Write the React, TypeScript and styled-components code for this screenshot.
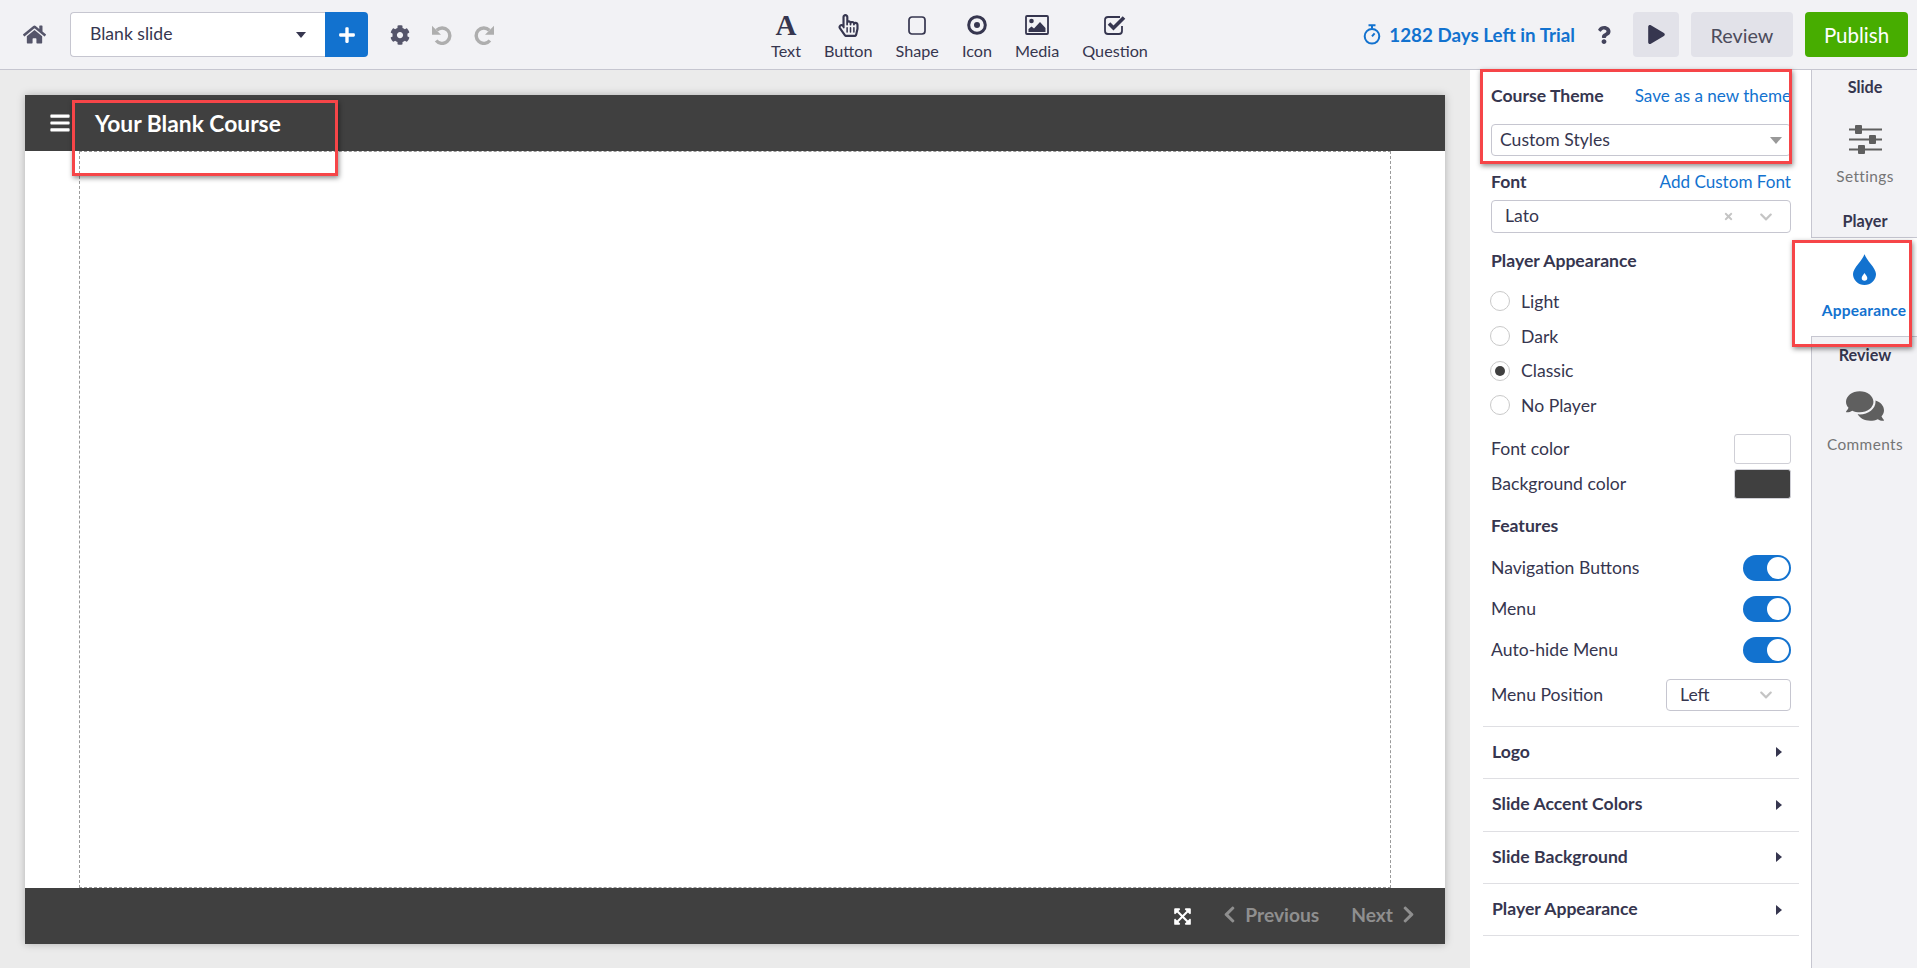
import React from "react";
import styled, { createGlobalStyle } from "styled-components";
import {
    FaHome,
    FaCog,
    FaPlus,
    FaRegHandPointer,
    FaQuestion,
    FaPlay,
    FaChevronLeft,
    FaChevronRight,
    FaChevronDown,
    FaComments,
    FaBars,
    FaExpandArrowsAlt,
    FaTimes,
} from "react-icons/fa";

const DARK = "#36364f";
const BLUE = "#1272cf";
const LINE = "#c6c6d0";

const GlobalStyle = createGlobalStyle`
    html, body {
        margin: 0;
        padding: 0;
        height: 100%;
        overflow: hidden;
        background: #ebebeb;
        font-family: Lato, "Open Sans", sans-serif;
        color: ${DARK};
    }
    * { box-sizing: border-box; }
`;

const toggles = ["Navigation Buttons", "Menu", "Auto-hide Menu"];
const radios = ["Light", "Dark", "Classic", "No Player"];
const sections = ["Logo", "Slide Accent Colors", "Slide Background", "Player Appearance"];

function ShapeIcon() {
    return (
        <svg width="18" height="19" viewBox="0 0 18 19" fill="none">
            <rect x="1" y="1" width="16" height="17" rx="3" stroke={DARK} strokeWidth="1.7" />
        </svg>
    );
}

function DotIcon() {
    return (
        <svg width="20" height="20" viewBox="0 0 20 20" fill="none">
            <circle cx="10" cy="10" r="8.300" stroke={DARK} strokeWidth="3" />
            <circle cx="10" cy="10" r="3" fill={DARK} />
        </svg>
    );
}

function MediaIcon() {
    return (
        <svg width="24" height="20" viewBox="0 0 24 20">
            <rect x="1" y="1" width="22" height="18" rx="1" fill="none" stroke={DARK} strokeWidth="1.800" />
            <circle cx="6.500" cy="6" r="2.300" fill={DARK} />
            <path fill={DARK} d="M3.500 17v-3l3-2.500 2.500 2 6-6.500 5.500 6v4z" />
        </svg>
    );
}

function CheckIcon() {
    return (
        <svg width="22" height="20" viewBox="0 0 22 20" fill="none">
            <path d="M16 2H4a3 3 0 0 0-3 3v11a3 3 0 0 0 3 3h11a3 3 0 0 0 3-3v-5" stroke={DARK} strokeWidth="1.800" />
            <path d="M5 8.500l4.500 4.500L20 2.500" stroke={DARK} strokeWidth="3.600" />
        </svg>
    );
}

function StopwatchIcon() {
    return (
        <svg width="18" height="21" viewBox="0 0 18 21" fill="none" stroke={BLUE} strokeWidth="2">
            <circle cx="9" cy="12.300" r="7.300" />
            <path d="M5.500 1.200h7M9 1.500v3M9 12.300l2.600-3" />
        </svg>
    );
}

function HistoryIcon({ flip }: { flip?: boolean }) {
    return (
        <HistoryGlyph $flip={flip} width="20" height="20" viewBox="0 0 20 20">
            <path d="M4.700 5.200a7.700 7.700 0 1 1-.6 10.300" fill="none" stroke="#aeaeae" strokeWidth="3.400" />
            <path d="M0 .8v9h9z" fill="#aeaeae" />
        </HistoryGlyph>
    );
}

function SlidersIcon() {
    return (
        <svg width="33" height="29" viewBox="0 0 33 29" fill="#5f5f5f">
            <rect x="0" y="3.500" width="33" height="2" />
            <rect x="6" y="0" width="7" height="9" rx="1" />
            <rect x="0" y="13.500" width="33" height="2" />
            <rect x="20" y="10" width="7" height="9" rx="1" />
            <rect x="0" y="23.500" width="33" height="2" />
            <rect x="9" y="20" width="7" height="9" rx="1" />
        </svg>
    );
}

function DropIcon() {
    return (
        <svg width="23" height="31" viewBox="0 0 23 31">
            <path
                fill={BLUE}
                d="M11.500 0C13 6 23 14 23 20a11.500 11 0 0 1-23 0C0 14 10 6 11.500 0z"
            />
            <path fill="#fff" d="M11.500 19c1 2 2.800 3.200 2.800 5a2.800 2.800 0 0 1-5.600 0c0-1.800 1.800-3 2.800-5z" />
        </svg>
    );
}

export default function App() {
    const tools = [
        { label: "Text", icon: <SerifGlyph>A</SerifGlyph> },
        { label: "Button", icon: <FaRegHandPointer size={23} /> },
        { label: "Shape", icon: <ShapeIcon /> },
        { label: "Icon", icon: <DotIcon /> },
        { label: "Media", icon: <MediaIcon /> },
        { label: "Question", icon: <CheckIcon /> },
    ];

    return (
        <Page>
            <GlobalStyle />
            <TopBar>
                <LeftGroup>
                    <HomeButton><FaHome size={23} /></HomeButton>
                    <SlideSelect>
                        <RaisedText>Blank slide</RaisedText>
                        <Caret />
                    </SlideSelect>
                    <AddButton><FaPlus size={18} /></AddButton>
                    <GearButton><FaCog size={20} /></GearButton>
                    <HistoryButton><HistoryIcon /></HistoryButton>
                    <HistoryButton><HistoryIcon flip /></HistoryButton>
                </LeftGroup>
                <ToolGroup>
                    {tools.map(tool => (
                        <Tool key={tool.label}>
                            <ToolIcon>{tool.icon}</ToolIcon>
                            <ToolLabel>{tool.label}</ToolLabel>
                        </Tool>
                    ))}
                </ToolGroup>
                <RightGroup>
                    <Trial>
                        <StopwatchIcon />
                        1282 Days Left in Trial
                    </Trial>
                    <Help><FaQuestion size={18} /></Help>
                    <PlayButton><FaPlay size={19} /></PlayButton>
                    <ReviewButton>Review</ReviewButton>
                    <PublishButton>Publish</PublishButton>
                </RightGroup>
            </TopBar>
            <Main>
                <Canvas>
                    <Player>
                        <PlayerHeader>
                            <FaBars size={22} />
                            <CourseTitle>Your Blank Course</CourseTitle>
                        </PlayerHeader>
                        <Stage>
                            <StageFrame />
                        </Stage>
                        <PlayerFooter>
                            <FaExpandArrowsAlt size={19} color="#fff" />
                            <NavButton $gap={28}>
                                <FaChevronLeft size={19} />
                                Previous
                            </NavButton>
                            <NavButton $gap={32}>
                                Next
                                <FaChevronRight size={19} />
                            </NavButton>
                        </PlayerFooter>
                        <TitleCallout />
                    </Player>
                </Canvas>
                <Panel>
                    <ThemeCallout />
                    <HeadRow $top={13}>
                        <Heading>Course Theme</Heading>
                        <PanelLink>Save as a new theme</PanelLink>
                    </HeadRow>
                    <ThemeSelect>
                        <RaisedText>Custom Styles</RaisedText>
                        <SmallCaret />
                    </ThemeSelect>
                    <HeadRow $top={13}>
                        <Heading>Font</Heading>
                        <PanelLink>Add Custom Font</PanelLink>
                    </HeadRow>
                    <FontSelect>
                        <RaisedText>Lato</RaisedText>
                        <SelectIcons>
                            <FaTimes size={11} />
                            <FaChevronDown size={14} />
                        </SelectIcons>
                    </FontSelect>
                    <HeadRow $top={15}>
                        <Heading>Player Appearance</Heading>
                    </HeadRow>
                    <RadioList>
                        {radios.map(name => (
                            <RadioRow key={name}>
                                <Radio $checked={name === "Classic"} />
                                {name}
                            </RadioRow>
                        ))}
                    </RadioList>
                    <ColorRow $top={11}>
                        Font color
                        <Swatch $color="#fff" />
                    </ColorRow>
                    <ColorRow $top={5}>
                        Background color
                        <Swatch $color="#404040" />
                    </ColorRow>
                    <HeadRow $top={15}>
                        <Heading>Features</Heading>
                    </HeadRow>
                    <ToggleList>
                        {toggles.map(name => (
                            <ToggleRow key={name}>
                                {name}
                                <Toggle />
                            </ToggleRow>
                        ))}
                    </ToggleList>
                    <PositionRow>
                        Menu Position
                        <PositionSelect>
                            Left
                            <FaChevronDown size={14} />
                        </PositionSelect>
                    </PositionRow>
                    <Accordion>
                        {sections.map(name => (
                            <AccordionRow key={name}>
                                <RaisedText>{name}</RaisedText>
                                <RightArrow />
                            </AccordionRow>
                        ))}
                    </Accordion>
                </Panel>
                <Rail>
                    <RailHeading>Slide</RailHeading>
                    <RailTab $top={28}>
                        <SlidersIcon />
                        <RailLabel $gap={12}>Settings</RailLabel>
                    </RailTab>
                    <RailHeading>Player</RailHeading>
                    <ActiveTab>
                        <DropIcon />
                        <ActiveLabel>Appearance</ActiveLabel>
                        <AppearanceCallout />
                    </ActiveTab>
                    <ReviewHeading>Review</ReviewHeading>
                    <RailTab $top={22}>
                        <FaComments size={38} color="#5f5f5f" />
                        <RailLabel $gap={9}>Comments</RailLabel>
                    </RailTab>
                </Rail>
            </Main>
        </Page>
    );
}

const Page = styled.div`
    display: flex;
    flex-direction: column;
    width: 100%;
    height: 100vh;
`;

const TopBar = styled.header`
    display: grid;
    grid-template-columns: 1fr auto 1fr;
    align-items: center;
    height: 70px;
    flex: none;
    background: #f2f2f5;
    border-bottom: 1px solid ${LINE};
`;

const LeftGroup = styled.div`
    display: flex;
    align-items: center;
    padding-left: 23px;
`;

const HomeButton = styled.div`
    display: flex;
    margin-right: 24px;
    color: #55556a;
`;

const RaisedText = styled.span`
    padding-bottom: 2px;
`;

const SlideSelect = styled.div`
    display: flex;
    align-items: center;
    justify-content: space-between;
    width: 255px;
    height: 45px;
    padding: 0 19px 0 19px;
    font-size: 17.600px;
    background: #fff;
    border: 1px solid ${LINE};
    border-right: 0;
    border-radius: 4px 0 0 4px;
`;

const Caret = styled.span`
    border-left: 5.500px solid transparent;
    border-right: 5.500px solid transparent;
    border-top: 6px solid ${DARK};
`;

const AddButton = styled.div`
    display: flex;
    align-items: center;
    justify-content: center;
    width: 43px;
    height: 45px;
    color: #fff;
    background: ${BLUE};
    border-radius: 0 4px 4px 0;
`;

const GearButton = styled.div`
    display: flex;
    margin-left: 22px;
    color: #55556a;
`;

const HistoryButton = styled.div`
    display: flex;
    margin-left: 22px;
`;

const HistoryGlyph = styled.svg<{ $flip?: boolean }>`
    transform: ${props => (props.$flip ? "scaleX(-1)" : "none")};
`;

const ToolGroup = styled.div`
    display: flex;
    align-items: flex-start;
    gap: 23px;
    padding: 5px 0 0 2px;
`;

const Tool = styled.div`
    display: flex;
    flex-direction: column;
    align-items: center;
    color: ${DARK};
`;

const ToolIcon = styled.div`
    display: flex;
    align-items: center;
    justify-content: center;
    height: 22px;
`;

const SerifGlyph = styled.span`
    font-family: "Liberation Serif", serif;
    font-weight: 700;
    font-size: 29px;
    line-height: 22px;
`;

const ToolLabel = styled.span`
    margin-top: 5px;
    font-size: 16.200px;
    line-height: 19px;
`;

const RightGroup = styled.div`
    display: flex;
    align-items: center;
    justify-content: flex-end;
    padding-right: 9px;
`;

const Trial = styled.div`
    display: flex;
    align-items: center;
    gap: 8px;
    font-size: 18.800px;
    font-weight: 700;
    color: ${BLUE};
    white-space: nowrap;
`;

const Help = styled.div`
    display: flex;
    margin: 0 20px 0 20px;
    color: #44445c;
`;

const PlayButton = styled.div`
    display: flex;
    align-items: center;
    justify-content: center;
    width: 46px;
    height: 45px;
    color: ${DARK};
    background: #e2e2e9;
    border-radius: 4px;
`;

const ReviewButton = styled.div`
    display: flex;
    align-items: center;
    justify-content: center;
    width: 102px;
    height: 45px;
    margin-left: 12px;
    font-size: 19.800px;
    color: #4c4c5c;
    background: #e2e2e9;
    border-radius: 4px;
`;

const PublishButton = styled.div`
    display: flex;
    align-items: center;
    justify-content: center;
    width: 103px;
    height: 45px;
    margin-left: 12px;
    font-size: 20.500px;
    color: #fff;
    background: #47ad00;
    border-radius: 4px;
`;

const Main = styled.main`
    display: flex;
    flex: 1;
    min-height: 0;
`;

const Canvas = styled.section`
    flex: 1;
    padding: 25px 25px 0;
`;

const Player = styled.div`
    position: relative;
    display: flex;
    flex-direction: column;
    width: 1420px;
    height: 849px;
    background: #fff;
    box-shadow: 0 0 8px rgba(0, 0, 0, 0.25);
`;

const PlayerHeader = styled.div`
    display: flex;
    align-items: center;
    height: 56px;
    padding-left: 24px;
    color: #fff;
    background: #404040;
`;

const CourseTitle = styled.span`
    margin-left: 24px;
    font-size: 22.800px;
    font-weight: 700;
`;

const Stage = styled.div`
    flex: 1;
    padding: 0 54px;
`;

const StageFrame = styled.div`
    height: 100%;
    border: 1px dashed #9a9a9a;
`;

const PlayerFooter = styled.div`
    display: flex;
    align-items: center;
    justify-content: flex-end;
    height: 56px;
    padding-right: 27px;
    background: #404040;
`;

const NavButton = styled.div<{ $gap: number }>`
    display: flex;
    align-items: center;
    gap: 6px;
    margin-left: ${props => props.$gap}px;
    padding-bottom: 3px;
    font-size: 19.200px;
    font-weight: 700;
    color: #8f8f8f;
`;

const Callout = styled.div`
    position: absolute;
    border: 3px solid #f64548;
    box-shadow: 1px 2px 5px rgba(0, 0, 0, 0.45);
    pointer-events: none;
`;

const TitleCallout = styled(Callout)`
    top: 5px;
    left: 47px;
    width: 266px;
    height: 76px;
`;

const ThemeCallout = styled(Callout)`
    top: -1px;
    left: 10px;
    width: 312px;
    height: 95px;
`;

const AppearanceCallout = styled(Callout)`
    top: 2px;
    left: -19px;
    width: 120px;
    height: 107px;
`;

const Panel = styled.aside`
    position: relative;
    flex: none;
    width: 341px;
    padding: 0 20px 0 21px;
    background: #fff;
    font-size: 17.600px;
`;

const HeadRow = styled.div<{ $top: number }>`
    display: flex;
    align-items: center;
    justify-content: space-between;
    height: 24px;
    margin-top: ${props => props.$top}px;
`;

const Heading = styled.span`
    font-size: 17.600px;
    font-weight: 700;
`;

const PanelLink = styled.span`
    font-size: 17.100px;
    color: ${BLUE};
`;

const ThemeSelect = styled.div`
    display: flex;
    align-items: center;
    justify-content: space-between;
    height: 32px;
    margin-top: 17px;
    padding: 0 8px;
    border: 1px solid ${LINE};
    border-radius: 4px;
`;

const SmallCaret = styled.span`
    border-left: 6px solid transparent;
    border-right: 6px solid transparent;
    border-top: 7px solid #999;
`;

const FontSelect = styled.div`
    display: flex;
    align-items: center;
    justify-content: space-between;
    height: 33px;
    margin-top: 7px;
    padding: 0 17px 0 13px;
    border: 1px solid ${LINE};
    border-radius: 4px;
`;

const SelectIcons = styled.span`
    display: flex;
    align-items: center;
    gap: 25px;
    color: #c4c4c4;
`;

const RadioList = styled.div`
    margin-top: 12px;
`;

const RadioRow = styled.div`
    display: flex;
    align-items: center;
    height: 34.700px;
    margin-left: -1px;
`;

const Radio = styled.span<{ $checked: boolean }>`
    display: flex;
    align-items: center;
    justify-content: center;
    width: 20px;
    height: 20px;
    margin-right: 11px;
    border: 1px solid #c9c9c9;
    border-radius: 50%;

    &::after {
        content: "";
        display: ${props => (props.$checked ? "block" : "none")};
        width: 10px;
        height: 10px;
        border-radius: 50%;
        background: #404040;
    }
`;

const ColorRow = styled.div<{ $top: number }>`
    display: flex;
    align-items: center;
    justify-content: space-between;
    margin-top: ${props => props.$top}px;
`;

const Swatch = styled.span<{ $color: string }>`
    width: 57px;
    height: 30px;
    background: ${props => props.$color};
    border: 1px solid #cfcfd6;
    border-radius: 3px;
`;

const ToggleList = styled.div`
    display: flex;
    flex-direction: column;
    gap: 15px;
    margin-top: 17px;
`;

const ToggleRow = styled.div`
    display: flex;
    align-items: center;
    justify-content: space-between;
    height: 26px;
`;

const Toggle = styled.span`
    position: relative;
    width: 48px;
    height: 26px;
    background: ${BLUE};
    border-radius: 13px;

    &::after {
        content: "";
        position: absolute;
        top: 2px;
        right: 2px;
        width: 22px;
        height: 22px;
        background: #fff;
        border-radius: 50%;
    }
`;

const PositionRow = styled.div`
    display: flex;
    align-items: center;
    justify-content: space-between;
    margin-top: 16px;
`;

const PositionSelect = styled.div`
    display: flex;
    align-items: center;
    justify-content: space-between;
    width: 125px;
    height: 32px;
    padding: 0 17px 0 13px;
    border: 1px solid ${LINE};
    border-radius: 4px;

    svg {
        color: #c4c4c4;
    }
`;

const Accordion = styled.div`
    margin: 15px -8px 0 -8px;
    border-top: 1px solid #dfdfe3;
`;

const AccordionRow = styled.div`
    display: flex;
    align-items: center;
    justify-content: space-between;
    height: 52.400px;
    padding: 0 17px 0 9px;
    font-weight: 700;
    border-bottom: 1px solid #dfdfe3;
`;

const RightArrow = styled.span`
    border-top: 5.500px solid transparent;
    border-bottom: 5.500px solid transparent;
    border-left: 6px solid ${DARK};
`;

const Rail = styled.nav`
    display: flex;
    flex-direction: column;
    align-items: center;
    flex: none;
    width: 106px;
    padding: 7px 0 0 1px;
    background: #f2f2f5;
    border-left: 1px solid ${LINE};
`;

const RailHeading = styled.div`
    height: 20px;
    font-size: 16.200px;
    font-weight: 700;
    line-height: 20px;
`;

const ReviewHeading = styled(RailHeading)`
    margin-top: 8px;
`;

const RailTab = styled.div<{ $top: number }>`
    display: flex;
    flex-direction: column;
    align-items: center;
    padding: ${props => props.$top}px 0 25px;
`;

const RailLabel = styled.span<{ $gap: number }>`
    margin-top: ${props => props.$gap}px;
    font-size: 15.400px;
    line-height: 20px;
    letter-spacing: 0.4px;
    color: #757575;
`;

const ActiveTab = styled.div`
    position: relative;
    display: flex;
    flex-direction: column;
    align-items: center;
    align-self: stretch;
    height: 100px;
    margin: 6px 0 0 -2px;
    padding-top: 16px;
    background: #fff;
    border-top: 1px solid ${LINE};
    border-bottom: 1px solid ${LINE};
`;

const ActiveLabel = styled.span`
    margin-top: 15px;
    font-size: 15.500px;
    font-weight: 700;
    line-height: 20px;
    letter-spacing: 0.2px;
    color: ${BLUE};
`;
